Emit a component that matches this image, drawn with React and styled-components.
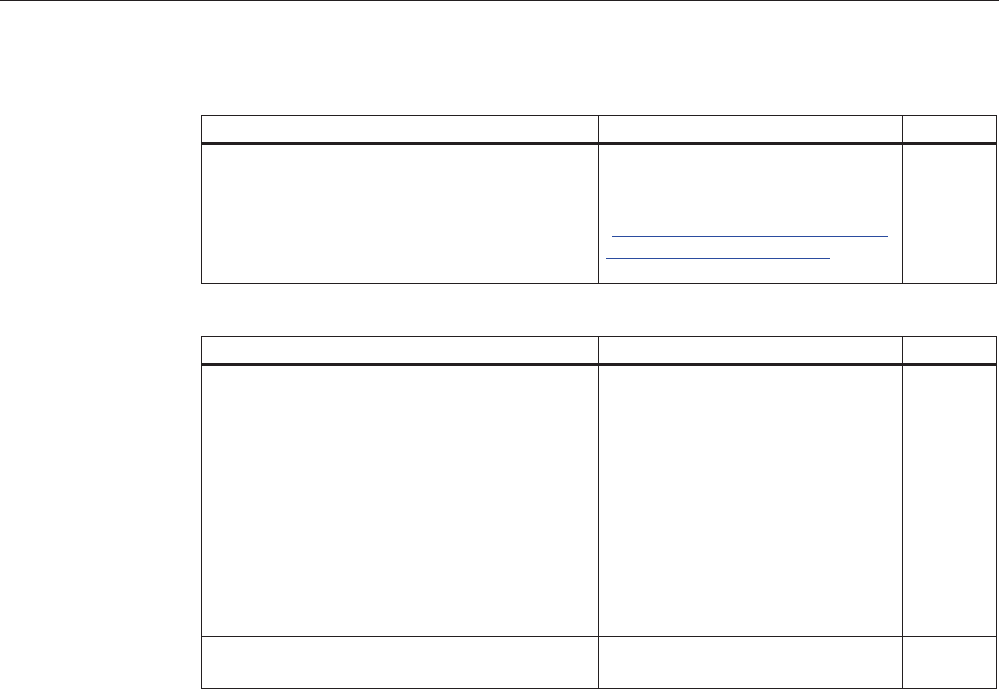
import styled, { createGlobalStyle } from 'styled-components'

const GlobalStyle = createGlobalStyle`
  html, body {
    margin: 0;
    padding: 0;
    background: #fff;
    font-family: "Liberation Sans", Arial, sans-serif;
    overflow: hidden;
  }
`

const Page = styled.div`
  width: 999px;
  height: 689px;
  border-top: 1px solid #231f20;
  box-sizing: border-box;
  display: flex;
  flex-direction: column;
  gap: 52px;
  padding: 114px 0 0 201px;
`

const Table = styled.div`
  display: grid;
  grid-template-columns: 397px 304px 94px;
  width: fit-content;
  border-left: 1px solid #231f20;
  border-top: 1px solid #231f20;
`

const Cell = styled.div`
  box-sizing: border-box;
  height: ${p => p.$h}px;
  border-right: 1px solid #231f20;
  border-bottom: ${p => (p.$head ? 3 : 1)}px solid #231f20;
  font-size: 12px;
  color: #231f20;
`

const LinkCell = styled(Cell)`
  display: flex;
  flex-direction: column;
  align-items: flex-start;
  gap: 21px;
  padding-top: 91px;
`

const LinkLine = styled.a`
  display: block;
  height: 0;
  width: ${p => p.$w}px;
  margin-left: ${p => p.$x}px;
  border-bottom: 1px solid #2b4c9f;
`

const Row = ({ h, head, children }) => (
  <>
    {children || [0, 1, 2].map(i => <Cell key={i} $h={h} $head={head} />)}
  </>
)

export default function App() {
  return (
    <>
      <GlobalStyle />
      <Page>
        <Table>
          <Row h={29} head />
          <Row h={139}>
            <Cell $h={139} />
            <LinkCell $h={139}>
              <LinkLine $x={13} $w={276} />
              <LinkLine $x={7} $w={224} />
            </LinkCell>
            <Cell $h={139} />
          </Row>
        </Table>
        <Table>
          <Row h={29} head />
          <Row h={271} />
          <Row h={52} />
        </Table>
      </Page>
    </>
  )
}
